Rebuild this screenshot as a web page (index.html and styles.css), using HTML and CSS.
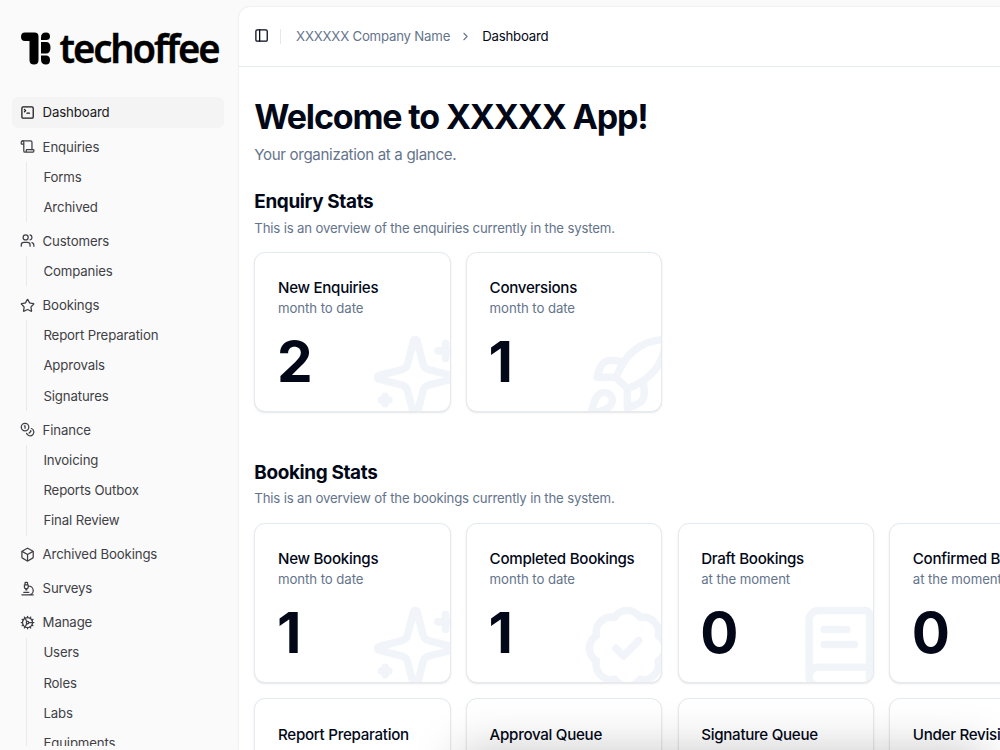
FILE: index.html
```html
<!DOCTYPE html>
<html lang="en">
<head>
  <meta charset="UTF-8">
  <meta name="viewport" content="width=device-width, initial-scale=1">
  <title>Dashboard</title>
  <link rel="stylesheet" href="styles.css">
</head>

<body>

  <!-- Shared icons -->
  <svg class="sprite">
    <symbol id="sparkles" viewBox="0 0 24 24">
      <path d="M9.937 15.5A2 2 0 0 0 8.5 14.063l-6.135-1.582a.5.5 0 0 1 0-.962L8.5 9.936A2 2 0 0 0 9.937 8.5l1.582-6.135a.5.5 0 0 1 .963 0L14.063 8.5A2 2 0 0 0 15.5 9.937l6.135 1.581a.5.5 0 0 1 0 .964L15.5 14.063a2 2 0 0 0-1.437 1.437l-1.582 6.135a.5.5 0 0 1-.963 0z"/>
      <path d="M20 3v4M22 5h-4M4 17v2M5 18H3"/>
    </symbol>
  </svg>

  <!-- Sidebar -->
  <aside class="sidebar">
    <div class="logo">
      <svg width="204" height="44" viewBox="0 0 204 44">
        <path d="M5 3.500H14.500Q18.500 3.500 18.500 7.500V31Q18.500 35.500 14 35.500Q9.500 35.500 9.500 31V12H5Q1 12 1 7.750Q1 3.500 5 3.500Z"/>
        <path d="M21 11V8.500Q21 3.500 26 3.500Q30 3.500 30 7.500Q30 11 26 11ZM21 13H26Q30.500 13 30.500 18.750Q30.500 24.500 26 24.500H21ZM21 26.500H26Q30 26.500 30 31Q30 35.500 26 35.500Q21 35.500 21 30.500Z"/>
        <text x="39.500" y="34" textLength="159" lengthAdjust="spacingAndGlyphs">techoffee</text>
      </svg>
    </div>

    <nav class="menu">
      <a class="menu-item active">
        <svg class="icon" viewBox="0 0 24 24"><path d="m7 11 2-2-2-2M11 13h4"/><rect x="3" y="3" width="18" height="18" rx="2"/></svg>
        Dashboard
      </a>

      <div class="menu-group">
        <a class="menu-item">
          <svg class="icon" viewBox="0 0 24 24"><path d="M19 17V5a2 2 0 0 0-2-2H4"/><path d="M8 21h12a2 2 0 0 0 2-2v-1a1 1 0 0 0-1-1H11a1 1 0 0 0-1 1v1a2 2 0 1 1-4 0V5a2 2 0 1 0-4 0v2a1 1 0 0 0 1 1h3"/></svg>
          Enquiries
        </a>
        <div class="submenu">
          <a>Forms</a>
          <a>Archived</a>
        </div>
      </div>

      <div class="menu-group">
        <a class="menu-item">
          <svg class="icon" viewBox="0 0 24 24"><path d="M16 21v-2a4 4 0 0 0-4-4H6a4 4 0 0 0-4 4v2"/><circle cx="9" cy="7" r="4"/><path d="M22 21v-2a4 4 0 0 0-3-3.870M16 3.130a4 4 0 0 1 0 7.750"/></svg>
          Customers
        </a>
        <div class="submenu">
          <a>Companies</a>
        </div>
      </div>

      <div class="menu-group">
        <a class="menu-item">
          <svg class="icon" viewBox="0 0 24 24"><path d="M11.525 2.295a.53.53 0 0 1 .95 0l2.310 4.679a2.123 2.123 0 0 0 1.595 1.160l5.166.756a.53.53 0 0 1 .294.904l-3.736 3.638a2.123 2.123 0 0 0-.611 1.878l.882 5.140a.53.53 0 0 1-.771.560l-4.618-2.428a2.122 2.122 0 0 0-1.973 0L6.396 21.010a.53.53 0 0 1-.770-.560l.881-5.139a2.122 2.122 0 0 0-.611-1.879L2.160 9.795a.53.53 0 0 1 .294-.906l5.165-.755a2.122 2.122 0 0 0 1.597-1.160z"/></svg>
          Bookings
        </a>
        <div class="submenu">
          <a>Report Preparation</a>
          <a>Approvals</a>
          <a>Signatures</a>
        </div>
      </div>

      <div class="menu-group">
        <a class="menu-item">
          <svg class="icon" viewBox="0 0 24 24"><circle cx="8" cy="8" r="6"/><path d="M18.090 10.370A6 6 0 1 1 10.340 18M7 6h1v4M16.710 13.880l.7.710-2.820 2.820"/></svg>
          Finance
        </a>
        <div class="submenu">
          <a>Invoicing</a>
          <a>Reports Outbox</a>
          <a>Final Review</a>
        </div>
      </div>

      <a class="menu-item">
        <svg class="icon" viewBox="0 0 24 24"><path d="M21 8a2 2 0 0 0-1-1.730l-7-4a2 2 0 0 0-2 0l-7 4A2 2 0 0 0 3 8v8a2 2 0 0 0 1 1.730l7 4a2 2 0 0 0 2 0l7-4A2 2 0 0 0 21 16Z"/><path d="m3.300 7 8.700 5 8.700-5M12 22V12"/></svg>
        Archived Bookings
      </a>

      <a class="menu-item">
        <svg class="icon" viewBox="0 0 24 24"><path d="M6 18h8M3 22h18M14 22a7 7 0 1 0 0-14h-1M9 14h2M9 12a2 2 0 0 1-2-2V6h6v4a2 2 0 0 1-2 2ZM12 6V3a1 1 0 0 0-1-1H9a1 1 0 0 0-1 1v3"/></svg>
        Surveys
      </a>

      <div class="menu-group">
        <a class="menu-item">
          <svg class="icon" viewBox="0 0 24 24"><circle cx="12" cy="12" r="8"/><circle cx="12" cy="12" r="2"/><path d="M12 2v2M12 22v-2M17 20.660l-1-1.730M11 10.270 7 3.340M20.660 17l-1.730-1M3.340 7l1.730 1M14 12h8M2 12h2M20.660 7l-1.730 1M3.340 17l1.730-1M17 3.340l-1 1.730M11 13.730l-4 6.930"/></svg>
          Manage
        </a>
        <div class="submenu">
          <a>Users</a>
          <a>Roles</a>
          <a>Labs</a>
          <a>Equipments</a>
        </div>
      </div>
    </nav>
  </aside>

  <!-- Main Area -->
  <main class="main">
    <header class="topbar">
      <svg class="icon" viewBox="0 0 24 24"><rect x="3" y="3" width="18" height="18" rx="2"/><path d="M9 3v18"/></svg>
      <span class="separator"></span>
      <span class="crumb">XXXXXX Company Name</span>
      <svg class="icon chevron" viewBox="0 0 24 24"><path d="m9 18 6-6-6-6"/></svg>
      <span class="crumb current">Dashboard</span>
    </header>

    <div class="content">
      <h1>Welcome to XXXXX App!</h1>
      <p class="lead">Your organization at a glance.</p>

      <section class="stats">
        <h2>Enquiry Stats</h2>
        <p>This is an overview of the enquiries currently in the system.</p>
        <div class="cards">
          <div class="card">
            <h3>New Enquiries</h3>
            <span>month to date</span>
            <strong>2</strong>
            <svg class="card-icon"><use href="#sparkles"/></svg>
          </div>
          <div class="card">
            <h3>Conversions</h3>
            <span>month to date</span>
            <strong>1</strong>
            <svg class="card-icon" viewBox="0 0 24 24"><path d="M4.500 16.500c-1.500 1.260-2 5-2 5s3.740-.5 5-2c.710-.840.700-2.130-.090-2.910a2.180 2.180 0 0 0-2.910-.090z"/><path d="m12 15-3-3a22 22 0 0 1 2-3.950A12.880 12.880 0 0 1 22 2c0 2.720-.780 7.500-6 11a22.350 22.350 0 0 1-4 2z"/><path d="M9 12H4s.550-3.030 2-4c1.620-1.080 5 0 5 0M12 15v5s3.030-.550 4-2c1.080-1.620 0-5 0-5"/></svg>
          </div>
        </div>
      </section>

      <section class="stats">
        <h2>Booking Stats</h2>
        <p>This is an overview of the bookings currently in the system.</p>
        <div class="cards">
          <div class="card">
            <h3>New Bookings</h3>
            <span>month to date</span>
            <strong>1</strong>
            <svg class="card-icon"><use href="#sparkles"/></svg>
          </div>
          <div class="card">
            <h3>Completed Bookings</h3>
            <span>month to date</span>
            <strong>1</strong>
            <svg class="card-icon" viewBox="0 0 24 24"><path d="M3.850 8.620a4 4 0 0 1 4.780-4.770 4 4 0 0 1 6.740 0 4 4 0 0 1 4.780 4.780 4 4 0 0 1 0 6.740 4 4 0 0 1-4.770 4.780 4 4 0 0 1-6.750 0 4 4 0 0 1-4.780-4.770 4 4 0 0 1 0-6.760Z"/><path d="m9 12 2 2 4-4"/></svg>
          </div>
          <div class="card">
            <h3>Draft Bookings</h3>
            <span>at the moment</span>
            <strong>0</strong>
            <svg class="card-icon" viewBox="0 0 24 24"><path d="M4 19.500v-15A2.500 2.500 0 0 1 6.500 2H19a1 1 0 0 1 1 1v18a1 1 0 0 1-1 1H6.500a1 1 0 0 1 0-5H20M8 11h8M8 7h6"/></svg>
          </div>
          <div class="card">
            <h3>Confirmed Bookings</h3>
            <span>at the moment</span>
            <strong>0</strong>
          </div>
          <div class="card">
            <h3>Report Preparation</h3>
            <span>at the moment</span>
            <strong>0</strong>
          </div>
          <div class="card">
            <h3>Approval Queue</h3>
            <span>at the moment</span>
            <strong>0</strong>
          </div>
          <div class="card">
            <h3>Signature Queue</h3>
            <span>at the moment</span>
            <strong>0</strong>
          </div>
          <div class="card">
            <h3>Under Revision</h3>
            <span>at the moment</span>
            <strong>0</strong>
          </div>
        </div>
      </section>
    </div>
    <div class="shade"></div>
  </main>

</body>
</html>
```
FILE: styles.css
```css
* {
  box-sizing: border-box;
}

body {
  margin: 0;
  font-family: Inter, sans-serif;
  font-size: 13.23px;
  background: #fafafa;
  color: #020817;
  display: flex;
  height: 100vh;
  overflow: hidden;
}

h1, h2, h3, p {
  margin: 0;
}

svg {
  flex-shrink: 0;
}

.sprite {
  display: none;
}

.icon, .card-icon {
  fill: none;
  stroke: currentColor;
  stroke-width: 2;
  stroke-linecap: round;
  stroke-linejoin: round;
}

.icon {
  width: 15.12px;
  height: 15.12px;
}

/* Sidebar */
.sidebar {
  width: 239px;
  height: 746px;
  flex-shrink: 0;
  padding: 29px 15.5px 0 12.4px;
  color: #3f3f46;
  letter-spacing: -0.14px;
  overflow: hidden;
}

.logo {
  height: 68.4px;
  padding-left: 7.6px;
}

.logo svg {
  display: block;
  fill: #000;
}

.logo text {
  font-family: "Noto Sans", sans-serif;
  font-size: 40px;
  font-weight: 600;
  letter-spacing: -2.2px;
  stroke: #000;
  stroke-width: 0.4px;
}

.menu {
  display: flex;
  flex-direction: column;
  gap: 3.78px;
}

.menu-item {
  display: flex;
  align-items: center;
  gap: 7.56px;
  height: 30.24px;
  padding: 0 7.56px;
  border-radius: 6px;
}

.menu-item.active {
  background: #f4f4f5;
  color: #18181b;
  line-height: 15px;
}

.submenu {
  display: flex;
  flex-direction: column;
  gap: 3.78px;
  margin-left: 14px;
  padding: 1.89px 0 1.89px 16px;
  border-left: 1px solid #e9e9ec;
}

.submenu a {
  height: 26.46px;
  line-height: 27.5px;
}

/* Main */
.main {
  position: relative;
  flex: 1;
  min-width: 0;
  margin-top: 7px;
  background: #fff;
  border-radius: 11px 0 0 0;
  box-shadow: 0 0 2px rgba(0, 0, 0, 0.14);
  overflow: hidden;
}

.topbar {
  display: flex;
  align-items: center;
  height: 60px;
  padding: 0 0 1px 15px;
  border-bottom: 1px solid #e4eaee;
}

.separator {
  width: 1px;
  height: 15px;
  margin: 0 15px 0 11px;
  background: #e2e8f0;
}

.crumb {
  color: #64748b;
  letter-spacing: -0.21px;
}

.crumb.current {
  color: #020817;
}

.chevron {
  width: 13px;
  height: 13px;
  margin: 0 10px 0 9px;
  color: #64748b;
}

.content {
  padding: 28px 0 0 15.3px;
}

h1 {
  font-size: 34px;
  line-height: 43px;
  font-weight: 700;
  letter-spacing: -1.15px;
  white-space: nowrap;
}

.lead {
  margin-top: 5px;
  font-size: 15.12px;
  line-height: 23px;
  letter-spacing: -0.34px;
  color: #64748b;
}

.stats {
  margin-top: 22px;
  margin-bottom: 46.5px;
}

.stats h2 {
  font-size: 18.9px;
  line-height: 27px;
  font-weight: 700;
  letter-spacing: -0.35px;
}

.stats p {
  margin-top: 3.5px;
  line-height: 19px;
  letter-spacing: -0.18px;
  color: #64748b;
}

.cards {
  display: grid;
  grid-template-columns: repeat(4, 196.5px);
  gap: 15.12px;
  margin-top: 14.2px;
}

.card {
  position: relative;
  display: flex;
  flex-direction: column;
  height: 160.7px;
  padding: 23.3px 22.7px;
  border: 1px solid #e4eaee;
  border-radius: 11px;
  background: #fff;
  box-shadow: 0 1px 2px rgba(0, 0, 0, 0.1);
  overflow: hidden;
  white-space: nowrap;
}

.card h3 {
  font-size: 15.12px;
  line-height: 23px;
  font-weight: 550;
  letter-spacing: -0.28px;
}

.card span {
  line-height: 19px;
  letter-spacing: -0.08px;
  color: #64748b;
}

.card strong {
  margin: 15px 0 0 -1px;
  font-size: 56.7px;
  line-height: 57px;
  font-weight: 700;
}

.card-icon {
  position: absolute;
  right: -11.3px;
  bottom: -11.3px;
  width: 90.7px;
  height: 90.7px;
  color: #f1f5f9;
}

/* Soft shadow rising from the bottom edge */
.shade {
  position: absolute;
  left: 220px;
  right: 15px;
  bottom: -60px;
  height: 60px;
  border-radius: 8px;
  box-shadow: 0 0 48px rgba(0, 0, 0, 0.22);
}
```
